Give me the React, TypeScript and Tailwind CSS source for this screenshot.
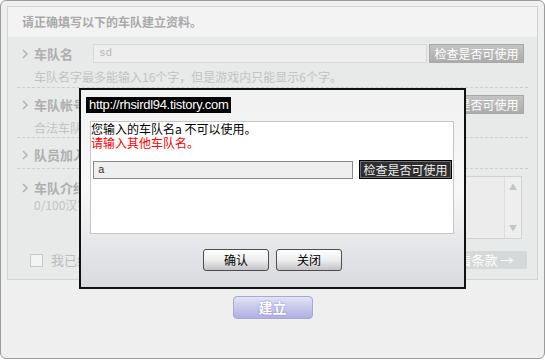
const cjk = "font-['Noto_Sans_CJK_SC',sans-serif]";

function Chevron() {
  return (
    <svg width="12" height="10" viewBox="0 0 12 10" className="shrink-0">
      <polyline points="1,1 5,5 1,9" fill="none" stroke="#b4b4b4" strokeWidth="1.6" />
    </svg>
  );
}

function GrayButton({ children, className = "" }: { children: React.ReactNode; className?: string }) {
  return (
    <div
      className={`flex items-center justify-center h-[19px] border border-[#a8a8a8] bg-gradient-to-b from-[#c4c4c4] to-[#acacac] text-white text-[12px] leading-none ${className}`}
    >
      {children}
    </div>
  );
}

function DialogButton({ children }: { children: React.ReactNode }) {
  return (
    <div className="flex items-center justify-center w-[66px] h-[22px] rounded-[3px] border border-[#4d4d4d] bg-gradient-to-b from-white via-[#eeeeee] to-[#c3c3c8] text-[12px] text-black">
      {children}
    </div>
  );
}

export default function App() {
  return (
    <div className={`relative w-[545px] h-[360px] bg-white ${cjk}`}>
      <div className="w-[545px] h-[359px] rounded-[6px] border border-[#9b9b9b] bg-[#efeff0] pt-[5px] px-[6px]">
        {/* form panel */}
        <div className="border border-[#d2d3d3] bg-[#e8e9e9]">
          <div className="h-[30px] bg-[#f3f3f3] pl-[14px] flex items-center text-[12px] font-bold text-[#a9a9a9]">
            请正确填写以下的车队建立资料。
          </div>

          {/* team name */}
          <div className="h-[50px] pt-[7px]">
            <div className="flex items-center h-[19px] pl-[14px]">
              <Chevron />
              <div className="w-[59px] text-[13px] font-bold text-[#aeaeae]">车队名</div>
              <div className="w-[334px] h-[19px] border border-[#d8d8d8] bg-[#eeeeee] pl-[5px] flex items-center font-['Liberation_Mono',monospace] text-[11px] text-[#b9b9b9]">
                sd
              </div>
              <GrayButton className="ml-[2px] w-[95px]">检查是否可使用</GrayButton>
            </div>
            <div className="pl-[26px] mt-[6px] leading-[16px] text-[12px] text-[#c3c3c3]">
              车队名字最多能输入16个字，但是游戏内只能显示6个字。
            </div>
          </div>
          <div className="mx-[9px] border-t border-dashed border-[#cdcdcd]" />

          {/* team account */}
          <div className="h-[49px] pt-[7px]">
            <div className="flex items-center h-[19px] pl-[14px]">
              <Chevron />
              <div className="w-[59px] text-[13px] font-bold text-[#aeaeae] whitespace-nowrap">车队帐号</div>
              <div className="w-[334px] h-[19px] border border-[#d8d8d8] bg-[#eeeeee]" />
              <GrayButton className="ml-[2px] w-[95px]">检查是否可使用</GrayButton>
            </div>
            <div className="pl-[26px] mt-[6px] leading-[16px] text-[12px] text-[#c3c3c3]">
              合法车队帐号为4~12个英文字母或数字。
            </div>
          </div>
          <div className="mx-[9px] border-t border-dashed border-[#cdcdcd]" />

          {/* join mode */}
          <div className="h-[30px] pt-[7px]">
            <div className="flex items-center h-[19px] pl-[14px]">
              <Chevron />
              <div className="text-[13px] font-bold text-[#aeaeae]">队员加入方式</div>
            </div>
          </div>
          <div className="mx-[9px] border-t border-dashed border-[#cdcdcd]" />

          {/* intro */}
          <div className="flex pt-[7px]">
            <div className="w-[85px] pl-[14px] pt-[2px]">
              <div className="flex items-center h-[19px]">
                <Chevron />
                <div className="text-[13px] font-bold text-[#aeaeae] whitespace-nowrap">车队介绍</div>
              </div>
              <div className="pl-[12px] leading-[16px] text-[12px] text-[#c3c3c3] whitespace-nowrap">0/100汉字</div>
            </div>
            <div className="flex w-[429px] h-[63px] border border-[#d3d3d3] bg-[#ececec]">
              <div className="flex-1" />
              <div className="w-[17px] border-l border-[#dddddd] bg-[#eeeeee] flex flex-col items-center justify-between py-[6px] text-[8px] leading-none text-[#c4c4c4]">
                <span>▲</span>
                <span>▼</span>
              </div>
            </div>
          </div>

          {/* agreement */}
          <div className="flex items-center h-[18px] mt-[12px] mb-[10px] pl-[22px] pr-[10px]">
            <div className="w-[13px] h-[13px] border border-[#c8c8c8] bg-[#f4f4f4]" />
            <div className="ml-[8px] text-[13px] text-[#bdbdbd] whitespace-nowrap">我已经阅读并同意车队条款</div>
            <div className="ml-auto w-[95px] h-[18px] bg-[#d4d8d8] flex items-center justify-center text-[13px] text-white">
              查看条款 →
            </div>
          </div>
        </div>

        {/* create button */}
        <div className="flex justify-center mt-[16px]">
          <div className="w-[80px] h-[23px] rounded-[4px] border border-[#aaa7d8] bg-gradient-to-b from-[#e4e4f6] via-[#c8c8ec] to-[#b1b0e0] flex items-center justify-center text-[14px] font-bold text-white [text-shadow:0_0_2px_#7f7bc0]">
            建立
          </div>
        </div>
      </div>

      {/* alert dialog */}
      <div className="absolute left-[79px] top-[88px] w-[387px] h-[201px] border-2 border-[#111111] bg-gradient-to-b from-[#f1f1f1] via-[#f8f8f8] to-[#d9dadf]">
        <div className="ml-[5px] mt-[7px] inline-flex items-center h-[16px] bg-black px-[3px] font-['Liberation_Sans',sans-serif] text-[13px] tracking-[-0.3px] text-white">
          http://rhsirdl94.tistory.com
        </div>
        <div className="ml-[9px] mt-[7px] w-[364px] h-[113px] border border-[#c6c6c6] bg-white">
          <div className="leading-[14px] text-[12px] text-black">您输入的车队名a 不可以使用。</div>
          <div className="leading-[14px] text-[12px] text-[#ff0000]">请输入其他车队名。</div>
          <div className="flex items-center mt-[10px] ml-[2px]">
            <div className="w-[260px] h-[18px] border border-[#8a8a8a] bg-[#efefef] pl-[4px] flex items-center font-['Liberation_Mono',monospace] text-[11px] text-[#333333]">
              a
            </div>
            <div className="ml-[6px] w-[93px] h-[19px] border border-black bg-[#2e2e2e] shadow-[inset_0_0_0_1px_#6e6e6e] flex items-center justify-center text-[12px] text-[#ececec]">
              检查是否可使用
            </div>
          </div>
        </div>
        <div className="flex justify-center gap-[7px] mt-[15px]">
          <DialogButton>确认</DialogButton>
          <DialogButton>关闭</DialogButton>
        </div>
      </div>
    </div>
  );
}
